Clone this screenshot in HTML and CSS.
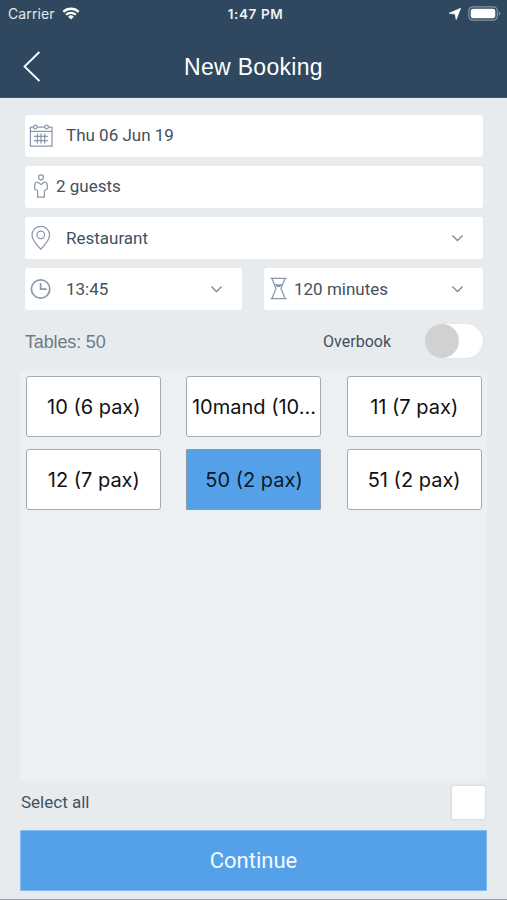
FILE: index.html
```html
<!DOCTYPE html>
<html lang="en">
<head>
<meta charset="utf-8">
<title>New Booking</title>
<link rel="stylesheet" href="styles.css">
</head>
<body>
<header class="header">
  <div class="status">
    <div class="carrier"><span>Carrier</span>
      <svg width="18" height="13" viewBox="0 0 18 13" fill="none" stroke="#fff" stroke-width="2.3"><path d="M1.3 4.9a11 11 0 0 1 15.4 0M4.1 7.8a7 7 0 0 1 9.8 0"/><path d="M9 12.4 6.1 9.7a4.2 4.2 0 0 1 5.8 0z" fill="#fff" stroke="none"/></svg>
    </div>
    <span class="clock">1:47 PM</span>
    <div class="indicators">
      <svg width="12" height="12" viewBox="0 0 12 12"><path d="M11.6.3 7.2 11.6 6.1 6.1.2 5.2z" fill="#fff" stroke="#fff" stroke-width=".7" stroke-linejoin="round"/></svg>
      <svg width="33" height="15" viewBox="0 0 33 15"><rect x=".8" y=".8" width="28.5" height="13.4" rx="4" fill="none" stroke="#8796a6" stroke-width="1.2"/><rect x="2.7" y="2.7" width="24.6" height="9.6" rx="2.4" fill="#fff"/><path d="M30.8 5.2q3 2.3 0 4.6z" fill="#8796a6"/></svg>
    </div>
  </div>
  <nav class="nav">
    <svg class="back" width="18" height="31" viewBox="0 0 18 31" fill="none" stroke="#fff" stroke-width="1.8"><path d="M16.4 1 1.5 15.5 16.4 30"/></svg>
    <h1>New Booking</h1>
  </nav>
</header>
<main class="main">
  <form class="fields">
    <div class="field">
      <svg class="icon" width="24" height="24" viewBox="0 0 24 24"><path d="M4.5 3.2H1.4v19H23v-19h-3.4M8.2 3.2h7.6M1.4 7.4H23M5 12.4h14M5 16.5h14M8.4 9.4v10M15.7 9.4v10M12 9.4v10"/><circle cx="6.3" cy="3" r="1.8"/><circle cx="17.6" cy="3" r="1.8"/></svg>
      <span class="label">Thu 06 Jun 19</span>
    </div>
    <div class="field guests">
      <svg class="icon" width="14" height="25" viewBox="0 0 14 25"><circle cx="7" cy="3.3" r="2.5"/><path d="M3.4 8 7 10.6 10.6 8q2.7.5 2.7 3v4l-2.9 1.8v6.4H3.6v-6.4L.7 15v-4q0-2.5 2.7-3z"/></svg>
      <span class="label">2 guests</span>
    </div>
    <div class="field">
      <svg class="icon" width="24" height="24" viewBox="0 0 24 24"><path d="M11.8 23.2Q3 14.4 3 9.1a8.8 8.8 0 0 1 17.6 0q0 5.3-8.8 14.1z"/><circle cx="11.8" cy="8.8" r="3.8"/></svg>
      <span class="label low">Restaurant</span>
      <svg class="chevron" width="13" height="8" viewBox="0 0 13 8"><path d="m1.4 1.4 5.1 5 5.1-5"/></svg>
    </div>
    <div class="pair">
      <div class="field">
        <svg class="icon clock-icon" width="24" height="24" viewBox="0 0 24 24"><circle cx="11.6" cy="12" r="9.2"/><path d="M11.6 6v6.2h6"/></svg>
        <span class="label low">13:45</span>
        <svg class="chevron" width="13" height="8" viewBox="0 0 13 8"><path d="m1.4 1.4 5.1 5 5.1-5"/></svg>
      </div>
      <div class="field duration">
        <svg class="icon" width="17" height="23" viewBox="0 0 17 23"><path d="M.5 1.4h16M.5 21.6h16M2 1.4l4 10.1-4 10.1M15 1.4l-4 10.1 4 10.1"/><path d="m4.8 6.7 3.7.8 3.7-.8-2 3.4H6.8z" fill="#8998ad" stroke="none"/></svg>
        <span class="label low">120 minutes</span>
        <svg class="chevron" width="13" height="8" viewBox="0 0 13 8"><path d="m1.4 1.4 5.1 5 5.1-5"/></svg>
      </div>
    </div>
  </form>
  <div class="options">
    <span class="tables">Tables: 50</span>
    <span class="overbook">Overbook</span>
    <span class="toggle"><span class="knob"></span></span>
  </div>
  <section class="panel">
    <button class="table"><span>10 (6 pax)</span></button>
    <button class="table"><span>10mand (10...</span></button>
    <button class="table"><span>11 (7 pax)</span></button>
    <button class="table"><span>12 (7 pax)</span></button>
    <button class="table selected"><span>50 (2 pax)</span></button>
    <button class="table"><span>51 (2 pax)</span></button>
  </section>
  <div class="select-all"><span>Select all</span><span class="checkbox"></span></div>
  <button class="continue">Continue</button>
</main>
</body>
</html>
```

FILE: styles.css
```css
* { box-sizing: border-box; }
body {
  margin: 0;
  height: 900px;
  display: flex;
  flex-direction: column;
  background: #e7ebee;
  border-bottom: 1px solid #9a9fa6;
  font-family: Roboto, sans-serif;
  color: #435161;
  overflow: hidden;
}
svg { display: block; flex: none; }
button { font-family: inherit; padding: 0; }
.header { height: 98px; flex: none; background: #2f485f; color: #fff; border-bottom: 1px solid #40546b; }
.status {
  height: 27px;
  display: grid;
  grid-template-columns: 1fr auto 1fr;
  align-items: center;
  padding: 0 6px 0 8px;
  font: 14px Inter, sans-serif;
}
.carrier { display: flex; align-items: center; gap: 7px; color: #e3e8ed; letter-spacing: .1px; }
.clock { font-weight: 600; font-size: 13.5px; letter-spacing: .6px; margin-left: 2px; color: #eef2f5; }
.indicators { display: flex; justify-content: flex-end; align-items: center; gap: 7px; }
.nav { height: 78px; display: grid; grid-template-columns: 60px 1fr 60px; align-items: center; }
.back { margin-left: 23px; }
h1 { margin: 3px 0 0; text-align: center; font: 400 23px "Liberation Sans", sans-serif; letter-spacing: .3px; }
.main { flex: 1; display: flex; flex-direction: column; padding: 17px 20px 8px; }
.fields { display: flex; flex-direction: column; gap: 9.5px; padding: 0 4px 0 5px; }
.field {
  height: 41.5px;
  display: flex;
  align-items: center;
  gap: 13px;
  padding: 0 19px 0 4px;
  background: #fff;
  border-radius: 3px;
  font-size: 17px;
}
.label { padding-bottom: 2px; }
.low { padding-bottom: 0; }
.guests { padding-left: 9px; gap: 8px; }
.pair { display: grid; grid-template-columns: 217px 219px; justify-content: space-between; }
.duration { padding-left: 6px; gap: 7px; }
.icon { fill: none; stroke: #8998ad; stroke-width: 1.25; }
.clock-icon { stroke-width: 1.7; }
.chevron { margin-left: auto; fill: none; stroke: #858a90; stroke-width: 1.4; }
.options { height: 61px; display: flex; align-items: center; padding: 2px 4px 0 5px; }
.tables { font: 18px "Liberation Sans", sans-serif; color: #6d7b89; letter-spacing: -.15px; padding-top: 2px; }
.overbook { margin-left: auto; font-size: 16px; }
.toggle {
  width: 58px;
  height: 34px;
  margin-left: 34px;
  border-radius: 17px;
  background: #fff;
  box-shadow: 0 0 1px #ccc;
}
.knob { display: block; width: 34px; height: 34px; border-radius: 50%; background: #d1d1d1; }
.panel {
  height: 410px;
  display: grid;
  grid-template-columns: repeat(3, 135px);
  grid-auto-rows: 61px;
  align-content: start;
  gap: 12px 25.2px;
  padding: 5px 6.3px;
  background: #ecf0f3;
}
.table {
  border: 1.5px solid #a8abae;
  border-radius: 3px;
  background: #fff;
  color: #111;
  font: 20px Inter, sans-serif;
  white-space: nowrap;
  padding-top: 2px;
}
.selected { background: #54a1ea; border-color: #8d9cac; border-radius: 1px; color: #0c1a28; }
.select-all { flex: 1; display: flex; align-items: center; justify-content: space-between; font-size: 17px; padding: 0 2px 6px 1px; }
.checkbox { width: 33px; height: 33px; background: #fff; border-radius: 2px; box-shadow: 0 0 2px 1px #dadddf; }
.continue { height: 61px; flex: none; border: 1px solid #83bcf2; background: #54a1ea; color: #f3f9ff; font-size: 22px; }
```
